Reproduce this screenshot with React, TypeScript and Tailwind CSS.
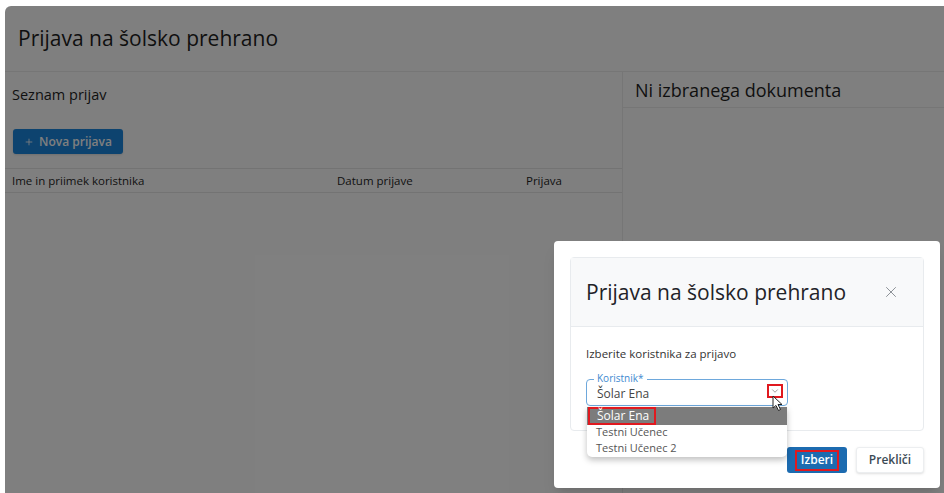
import { X, ChevronDown, Plus } from 'lucide-react'

const font = { fontFamily: '"Open Sans", "Noto Sans", sans-serif' }

function Cursor() {
  return (
    <svg width="12" height="17" viewBox="0 0 12 17" className="absolute left-[185px] top-[15px] z-20">
      <path d="M1 1 L1 13 L4 10.5 L6.5 15.5 L8.5 14.5 L6 9.5 L10 9.5 Z" fill="#fff" stroke="#222" strokeWidth="1" strokeLinejoin="round" />
    </svg>
  )
}

export default function App() {
  const users = ['Šolar Ena', 'Testni Učenec', 'Testni Učenec 2']

  return (
    <div className="w-[944px] h-[493px] bg-white pt-[6px] pl-[5px] overflow-hidden" style={font}>
      <div className="relative w-full h-full rounded-tl-[6px] overflow-hidden bg-white text-[#1f1f1f]">
        {/* Page header */}
        <div className="h-[66px] flex items-center pl-[13px] border-b border-[#ececec]">
          <h1 className="text-[21px] leading-none">Prijava na šolsko prehrano</h1>
        </div>

        <div className="flex h-[421px]">
          {/* List of applications */}
          <div className="w-[618px] border-r border-[#ececec] flex flex-col">
            <div className="h-[46px] flex items-center pl-[7px]">
              <h2 className="text-[14.5px] leading-none">Seznam prijav</h2>
            </div>
            <div className="h-[50px] pl-[8px] pt-[11px]">
              <button className="w-[110px] h-[25px] rounded-[3px] bg-[#1a86de] text-white text-[12px] font-semibold flex items-center justify-center gap-[5px] shadow-sm">
                <Plus size={10} strokeWidth={2} />
                Nova prijava
              </button>
            </div>
            <div className="border-t border-b border-[#e6e6e6] h-[25px] grid grid-cols-[325px_189px_1fr] items-center pl-[7px] text-[11.5px]">
              <span>Ime in priimek koristnika</span>
              <span>Datum prijave</span>
              <span>Prijava</span>
            </div>
          </div>

          {/* Document preview */}
          <div className="flex-1 flex flex-col">
            <div className="h-[36px] flex items-center pl-[12px] border-b border-[#ececec]">
              <h2 className="text-[18px] leading-none">Ni izbranega dokumenta</h2>
            </div>
          </div>
        </div>

        {/* Backdrop */}
        <div className="absolute inset-0 bg-black/50" />

        {/* Dialog */}
        <div className="absolute left-[549px] top-[235px] w-[386px] h-[247px] bg-white rounded-[4px] shadow-lg p-[16px] flex flex-col">
          <div className="border border-[#e8ebee] rounded-[4px] flex flex-col">
            <div className="h-[69px] bg-[#f8f9fa] border-b border-[#e8ebee] flex items-center justify-between pl-[15px] pr-[23px]">
              <h3 className="text-[21px] leading-none text-[#1f2328]">Prijava na šolsko prehrano</h3>
              <X size={18} strokeWidth={1.3} className="text-[#8a8f94]" />
            </div>
            <div className="h-[103px] pl-[15px] pt-[21px]">
              <p className="text-[11.5px] leading-none text-[#333]">Izberite koristnika za prijavo</p>
              <div className="relative mt-[19px] w-[202px] h-[27px] border border-[#6ea8dc] rounded-[4px] flex items-center pl-[10px]">
                <span className="absolute -top-[7px] left-[7px] px-[3px] bg-white text-[10px] leading-none text-[#3e8ad0]">Koristnik*</span>
                <span className="text-[12px] text-[#444] pt-[3px]">Šolar Ena</span>
                <div className="absolute right-[4px] top-[4px] w-[16px] h-[14px] border-2 border-[#e0191f] flex items-center justify-center">
                  <ChevronDown size={10} strokeWidth={1.5} className="text-[#666]" />
                </div>
                <Cursor />

                {/* Options list */}
                <div className="absolute left-0 top-[27px] w-[200px] bg-white rounded-b-[5px] shadow-[0_3px_6px_rgba(0,0,0,0.25)] text-[11px] text-[#555] overflow-hidden z-10 pb-[1px]">
                  {users.map((u, i) => (
                    <div
                      key={u}
                      className={
                        i === 0
                          ? 'h-[18px] bg-[#7c7c7c] text-white flex items-center'
                          : 'h-[15.5px] flex items-center pl-[9px]'
                      }
                    >
                      {i === 0 ? (
                        <span className="h-[18px] border-2 border-[#e0191f] pl-[7px] pr-[5px] flex items-center text-[12px] ml-[1px]">
                          {u}
                        </span>
                      ) : (
                        <span className="leading-[14px]">{u}</span>
                      )}
                    </div>
                  ))}
                </div>
              </div>
            </div>
          </div>
          <div className="flex justify-end gap-[9px] mt-[16px]">
            <button className="w-[60px] h-[26px] rounded-[3px] bg-[#1c6bb0] text-white text-[12px] font-semibold flex items-center justify-center">
              <span className="border-2 border-[#e0191f] px-[4px] h-[21px] flex items-center">Izberi</span>
            </button>
            <button className="w-[68px] h-[26px] rounded-[3px] bg-white border border-[#eceef0] shadow-sm text-[#3b4a55] text-[12px] font-semibold">
              Prekliči
            </button>
          </div>
        </div>
      </div>
    </div>
  )
}
